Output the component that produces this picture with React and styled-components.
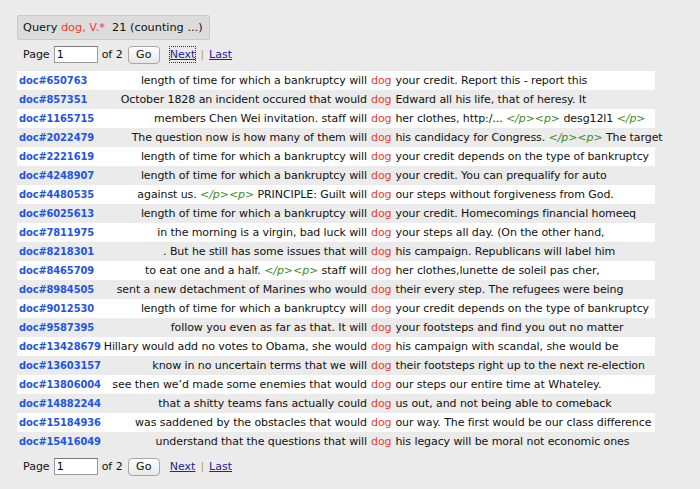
import React from 'react';
import styled, { createGlobalStyle } from 'styled-components';

const rows = [
  { id: '650763', left: 'length of time for which a bankruptcy will', right: 'your credit. Report this - report this' },
  { id: '857351', left: 'October 1828 an incident occured that would', right: 'Edward all his life, that of heresy. It' },
  { id: '1165715', left: 'members Chen Wei invitation. staff will', right: 'her clothes, http:/... <t></p><p></t> desg12l1 <t></p></t>' },
  { id: '2022479', left: 'The question now is how many of them will', right: 'his candidacy for Congress. <t></p><p></t> The target' },
  { id: '2221619', left: 'length of time for which a bankruptcy will', right: 'your credit depends on the type of bankruptcy' },
  { id: '4248907', left: 'length of time for which a bankruptcy will', right: 'your credit. You can prequalify for auto' },
  { id: '4480535', left: 'against us. <t></p><p></t> PRINCIPLE: Guilt will', right: 'our steps without forgiveness from God.' },
  { id: '6025613', left: 'length of time for which a bankruptcy will', right: 'your credit. Homecomings financial homeeq' },
  { id: '7811975', left: 'in the morning is a virgin, bad luck will', right: 'your steps all day. (On the other hand,' },
  { id: '8218301', left: '. But he still has some issues that will', right: 'his campaign. Republicans will label him' },
  { id: '8465709', left: 'to eat one and a half. <t></p><p></t> staff will', right: 'her clothes,lunette de soleil pas cher,' },
  { id: '8984505', left: 'sent a new detachment of Marines who would', right: 'their every step. The refugees were being' },
  { id: '9012530', left: 'length of time for which a bankruptcy will', right: 'your credit depends on the type of bankruptcy' },
  { id: '9587395', left: 'follow you even as far as that. It will', right: 'your footsteps and find you out no matter' },
  { id: '13428679', left: 'Hillary would add no votes to Obama, she would', right: 'his campaign with scandal, she would be' },
  { id: '13603157', left: 'know in no uncertain terms that we will', right: 'their footsteps right up to the next re-election' },
  { id: '13806004', left: 'see then we\u2019d made some enemies that would', right: 'our steps our entire time at Whateley.' },
  { id: '14882244', left: 'that a shitty teams fans actually could', right: 'us out, and not being able to comeback' },
  { id: '15184936', left: 'was saddened by the obstacles that would', right: 'our way. The first would be our class difference' },
  { id: '15416049', left: 'understand that the questions that will', right: 'his legacy will be moral not economic ones' },
];

const GlobalStyle = createGlobalStyle`
  body {
    margin: 0;
    background: #ebebeb;
    font-family: "DejaVu Sans", sans-serif;
    font-size: 11px;
    color: #111;
  }
`;

const Page = styled.div`
  padding: 15px 17px 10px;
`;

const QueryBox = styled.div`
  display: inline-block;
  background: #dcdcdc;
  border: 1px solid #c9c9c9;
  border-radius: 2px;
  padding: 0 6px 0 5px;
  line-height: 23px;
  font-size: 11.3px;
`;

const Term = styled.span`
  color: #ec3b2c;
`;

const Pager = styled.div`
  display: flex;
  align-items: center;
  gap: 4px;
  padding-left: 6px;
  height: 17px;
  margin: ${(p) => (p.$bottom ? '7px 0 0' : '6px 0 8px')};
`;

const PageInput = styled.input`
  width: 38px;
  height: 13px;
  padding: 1px 2px;
  border: 1px solid #9a9a9a;
  border-top-color: #7a7a7a;
  font: inherit;
  background: #fff;
`;

const GoButton = styled.button`
  height: 18px;
  width: 32px;
  padding: 0;
  margin-left: 1px;
  border: 1px solid #a8a8a8;
  border-radius: 4px;
  background: linear-gradient(#ffffff, #e6e6e6);
  font: inherit;
  color: #111;
`;

const NavLink = styled.a`
  color: #22229a;
  text-decoration: underline;
  line-height: 15px;
  outline: ${(p) => (p.$focus ? '1px dotted #2222aa' : 'none')};
  margin-left: ${(p) => (p.$first ? '6px' : '0')};
`;

const Sep = styled.span`
  color: #c9a040;
  margin: 0 1px;
`;

const Table = styled.div`
  width: 638px;
  letter-spacing: -0.08px;
`;

const Row = styled.div`
  display: grid;
  grid-template-columns: 84px 266px auto 1fr;
  height: 19px;
  line-height: 19px;
  background: ${(p) => (p.$odd ? '#ffffff' : 'transparent')};
  white-space: nowrap;
`;

const DocLink = styled.a`
  color: #1f55e6;
  font-family: "DejaVu Sans Condensed", "DejaVu Sans", sans-serif;
  font-weight: bold;
  letter-spacing: -0.12px;
  text-decoration: none;
  padding-left: 2px;
`;

const Left = styled.span`
  text-align: right;
  overflow: hidden;
  direction: rtl;
`;

const Inner = styled.span`
  direction: ltr;
  unicode-bidi: embed;
`;

const Keyword = styled.span`
  color: #ec3b2c;
  padding: 0 4px;
`;

const Right = styled.span`
  overflow: visible;
`;

const Tag = styled.i`
  color: #3d8a25;
`;

const renderText = (text) =>
  text.split(/(<t>.*?<\/t>)/).map((part, i) =>
    part.startsWith('<t>') ? <Tag key={i}>{part.slice(3, -4)}</Tag> : part
  );

const PagerBar = ({ bottom }) => (
  <Pager $bottom={bottom}>
    <span>Page</span>
    <PageInput defaultValue="1" />
    <span>of 2</span>
    <GoButton>Go</GoButton>
    <NavLink href="#" $first $focus={!bottom}>Next</NavLink>
    <Sep>|</Sep>
    <NavLink href="#">Last</NavLink>
  </Pager>
);

const App = () => (
  <Page>
    <GlobalStyle />
    <QueryBox>
      Query <Term>dog, V.*</Term>&nbsp; 21 (counting ...)
    </QueryBox>
    <PagerBar />
    <Table>
      {rows.map((r, i) => (
        <Row key={r.id} $odd={i % 2 === 0}>
          <DocLink href="#">doc#{r.id}</DocLink>
          <Left><Inner>{renderText(r.left)}</Inner></Left>
          <Keyword>dog</Keyword>
          <Right>{renderText(r.right)}</Right>
        </Row>
      ))}
    </Table>
    <PagerBar bottom />
  </Page>
);

export default App;
